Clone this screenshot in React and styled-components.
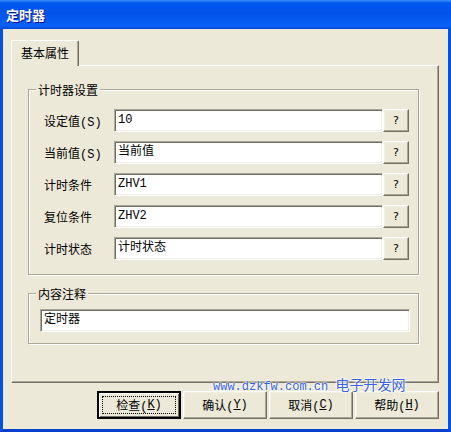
import styled, { createGlobalStyle } from "styled-components";

const GlobalStyle = createGlobalStyle`
  html, body { margin: 0; padding: 0; background: #ece9d8; }
  body { font-family: "Liberation Mono", "Noto Sans CJK SC", monospace; font-size: 12px; }
`;

const fields = [
  { label: "设定值(S)", value: "10" },
  { label: "当前值(S)", value: "当前值" },
  { label: "计时条件", value: "ZHV1" },
  { label: "复位条件", value: "ZHV2" },
  { label: "计时状态", value: "计时状态" },
];

const buttons = [
  { text: "检查", key: "K", primary: true },
  { text: "确认", key: "Y" },
  { text: "取消", key: "C" },
  { text: "帮助", key: "H" },
];

function App() {
  return (
    <>
      <GlobalStyle />
      <Window>
        <TitleBar>定时器</TitleBar>
        <Body>
          <TabStrip>
            <Tab>基本属性</Tab>
          </TabStrip>
          <Panel>
            <Group>
              <Caption>计时器设置</Caption>
              <Rows>
                {fields.map((f) => (
                  <Row key={f.label}>
                    <Label>{f.label}</Label>
                    <Field>{f.value}</Field>
                    <HelpButton>?</HelpButton>
                  </Row>
                ))}
              </Rows>
            </Group>
            <Group $note>
              <Caption>内容注释</Caption>
              <Field>定时器</Field>
            </Group>
          </Panel>
          <ButtonRow>
            {buttons.map((b) => (
              <Button key={b.key} $primary={b.primary}>
                {b.primary && <Focus />}
                {b.text}(<u>{b.key}</u>)
              </Button>
            ))}
          </ButtonRow>
          <Watermark>
            www.dzkfw.com.cn <Big>电子开发网</Big>
          </Watermark>
        </Body>
      </Window>
    </>
  );
}
export default App;

const Window = styled.div`
  width: 451px;
  height: 432px;
  display: flex;
  flex-direction: column;
  overflow: hidden;
`;

const TitleBar = styled.div`
  height: 29px;
  flex: none;
  display: flex;
  align-items: center;
  padding-left: 6px;
  color: #fff;
  font-family: "Noto Sans CJK SC", sans-serif;
  font-weight: bold;
  font-size: 13px;
  text-shadow: 1px 1px 0 #0f1089;
  background: linear-gradient(
    180deg,
    #3d95ff 0%,
    #0058ee 10%,
    #0053ea 45%,
    #0860f5 85%,
    #0a5bf0 93%,
    #0046d0 100%
  );
`;

const Body = styled.div`
  position: relative;
  flex: 1;
  display: flex;
  flex-direction: column;
  background: #ece9d8;
  border: 3px solid #0750e4;
  border-top: none;
  border-bottom-color: #0a40d0;
  padding: 11px 9px 10px 8px;
`;

const TabStrip = styled.div`
  display: flex;
  height: 25px;
  position: relative;
  z-index: 1;
`;

const Tab = styled.div`
  width: 68px;
  box-sizing: border-box;
  height: 26px;
  display: flex;
  align-items: center;
  justify-content: center;
  padding-bottom: 2px;
  background: #ece9d8;
  border-left: 1px solid #fff;
  border-top: 1px solid #fff;
  border-right: 1px solid #716f64;
  box-shadow: inset -1px 0 0 #aca899;
  border-radius: 2px 2px 0 0;
  font-family: "Noto Sans CJK SC", sans-serif;
`;

const Panel = styled.div`
  width: 428px;
  height: 318px;
  box-sizing: border-box;
  border-left: 1px solid #fff;
  border-top: 1px solid #fff;
  border-right: 1px solid #716f64;
  border-bottom: 1px solid #716f64;
  box-shadow: inset -1px -1px 0 #aca899;
  padding: 23px 0 0 16px;
  display: flex;
  flex-direction: column;
  gap: 18px;
`;

const Group = styled.div`
  position: relative;
  width: 391px;
  box-sizing: border-box;
  border: 1px solid #aca899;
  box-shadow: inset 1px 1px 0 #fff, 1px 1px 0 #fff;
  padding: ${(p) => (p.$note ? "15px 8px 11px 11px" : "19px 9px 14px 15px")};
`;

const Caption = styled.span`
  position: absolute;
  top: -9px;
  left: 7px;
  padding: 0 2px;
  background: #ece9d8;
  line-height: 17px;
  font-family: "Noto Sans CJK SC", sans-serif;
`;

const Rows = styled.div`
  display: flex;
  flex-direction: column;
  gap: 9px;
`;

const Row = styled.div`
  display: flex;
  align-items: center;
`;

const Label = styled.span`
  width: 70px;
  flex: none;
  white-space: nowrap;
`;

const Field = styled.div`
  flex: 1;
  height: 23px;
  box-sizing: border-box;
  background: #fff;
  border: 1px solid;
  border-color: #aca899 #fff #fff #aca899;
  box-shadow: inset 1px 1px 0 #716f64, inset -1px -1px 0 #f1efe2;
  padding: 2px 3px;
  line-height: 16px;
  white-space: nowrap;
`;

const raised = `
  background: #ece9d8;
  box-sizing: border-box;
  border: 1px solid;
  border-color: #fff #716f64 #716f64 #fff;
  box-shadow: inset -1px -1px 0 #aca899, inset 1px 1px 0 #f1efe2;
`;

const HelpButton = styled.div`
  ${raised}
  width: 26px;
  height: 23px;
  flex: none;
  display: flex;
  align-items: center;
  justify-content: center;
  font-family: "DejaVu Sans", sans-serif;
  font-size: 11px;
`;

const ButtonRow = styled.div`
  margin-top: 8px;
  display: flex;
  justify-content: flex-end;
  gap: 2px;
`;

const Button = styled.div`
  ${raised}
  position: relative;
  width: 84px;
  height: 28px;
  display: flex;
  align-items: center;
  justify-content: center;
  ${(p) =>
    p.$primary &&
    `
    border: 2px solid #000;
    box-shadow: inset 1px 1px 0 #fff, inset -1px -1px 0 #716f64;
  `}
  u { text-underline-offset: 1px; }
`;

const Focus = styled.span`
  position: absolute;
  inset: 3px;
  border: 1px dotted #000;
`;

const Watermark = styled.div`
  position: absolute;
  left: 210px;
  top: 347px;
  color: #3a63dc;
  font-family: "Liberation Mono", monospace;
  font-size: 12px;
  line-height: 16px;
  text-shadow: 0 0 2px #fff, 0 0 2px #fff, 0 0 3px #fff;
  white-space: nowrap;
`;

const Big = styled.span`
  font-family: "Noto Sans CJK SC", sans-serif;
  font-size: 14px;
`;
